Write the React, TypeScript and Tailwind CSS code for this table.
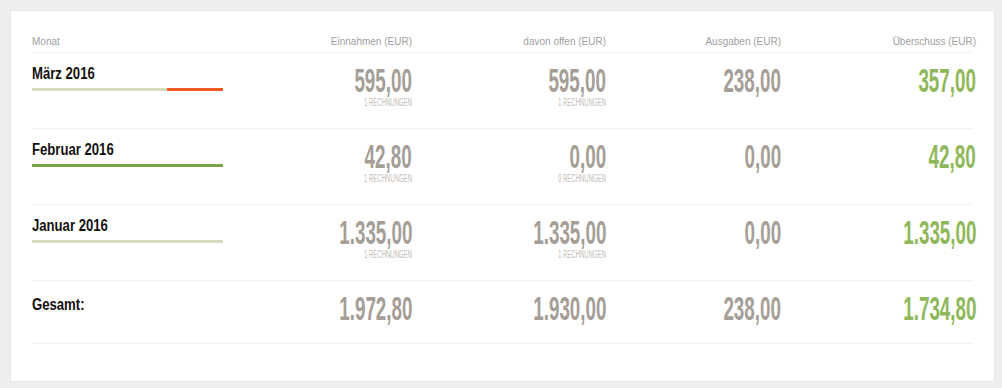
const rows = [
  {
    label: "März 2016",
    income: "595,00",
    incomeCount: "1 Rechnungen",
    open: "595,00",
    openCount: "1 Rechnungen",
    spent: "238,00",
    surplus: "357,00",
    bar: "split",
  },
  {
    label: "Februar 2016",
    income: "42,80",
    incomeCount: "1 Rechnungen",
    open: "0,00",
    openCount: "0 Rechnungen",
    spent: "0,00",
    surplus: "42,80",
    bar: "dark",
  },
  {
    label: "Januar 2016",
    income: "1.335,00",
    incomeCount: "1 Rechnungen",
    open: "1.335,00",
    openCount: "1 Rechnungen",
    spent: "0,00",
    surplus: "1.335,00",
    bar: "light",
  },
];

const cols = "grid grid-cols-[190px_190px_194px_175px_195px]";
const sans = "font-['Liberation_Sans',Arial,sans-serif]";

function Num({ value, green, sub }: { value: string; green?: boolean; sub?: string }) {
  return (
    <div className="flex flex-col items-end">
      <span
        className={`${sans} inline-block origin-right scale-x-[0.57] text-[33px] font-bold leading-[33px] ${
          green ? "text-[#8fb85a]" : "text-[#a59e97]"
        }`}
      >
        {value}
      </span>
      {sub && (
        <span className={`${sans} mt-[1px] inline-block origin-right scale-x-[0.6] text-[10px] leading-[10px] uppercase text-[#c4beb7]`}>
          {sub}
        </span>
      )}
    </div>
  );
}

function Bar({ kind }: { kind: string }) {
  if (kind === "split") {
    return (
      <div className="mt-[4px] flex h-[3px] w-[191px]">
        <div className="w-[135px] bg-[#d5dfc0]" />
        <div className="flex-1 bg-[#f05a22]" />
      </div>
    );
  }
  return (
    <div className={`mt-[4px] h-[3px] w-[191px] ${kind === "dark" ? "bg-[#7ba444]" : "bg-[#d5dfc0]"}`} />
  );
}

function Title({ text }: { text: string }) {
  return (
    <span className={`${sans} inline-block origin-left scale-x-[0.82] whitespace-nowrap text-[16px] font-bold leading-[20px] text-[#14110f]`}>
      {text}
    </span>
  );
}

export default function App() {
  return (
    <div className="h-[388px] w-[1002px] bg-[#efeeec] pl-[11px] pt-[11px]">
      <div className="h-[370px] w-[983px] bg-white px-[21px] pt-[25px] shadow-[0_0_2px_rgba(0,0,0,0.08)]">
        <div className={`${cols} ${sans} border-b border-[#f2f2f2] pb-[4px] text-[10px] leading-[12px] text-[#a0a0a0]`}>
          <div>Monat</div>
          <div className="text-right">Einnahmen (EUR)</div>
          <div className="text-right">davon offen (EUR)</div>
          <div className="text-right">Ausgaben (EUR)</div>
          <div className="text-right">Überschuss (EUR)</div>
        </div>
        {rows.map((r) => (
          <div key={r.label} className={`${cols} h-[76px] border-b border-[#f2f2f2] pt-[11px]`}>
            <div className="flex flex-col">
              <Title text={r.label} />
              <Bar kind={r.bar} />
            </div>
            <Num value={r.income} sub={r.incomeCount} />
            <Num value={r.open} sub={r.openCount} />
            <Num value={r.spent} />
            <Num value={r.surplus} green />
          </div>
        ))}
        <div className={`${cols} h-[63px] border-b border-[#f2f2f2] pt-[11px]`}>
          <div>
            <Title text="Gesamt:" />
          </div>
          <Num value="1.972,80" />
          <Num value="1.930,00" />
          <Num value="238,00" />
          <Num value="1.734,80" green />
        </div>
      </div>
    </div>
  );
}
